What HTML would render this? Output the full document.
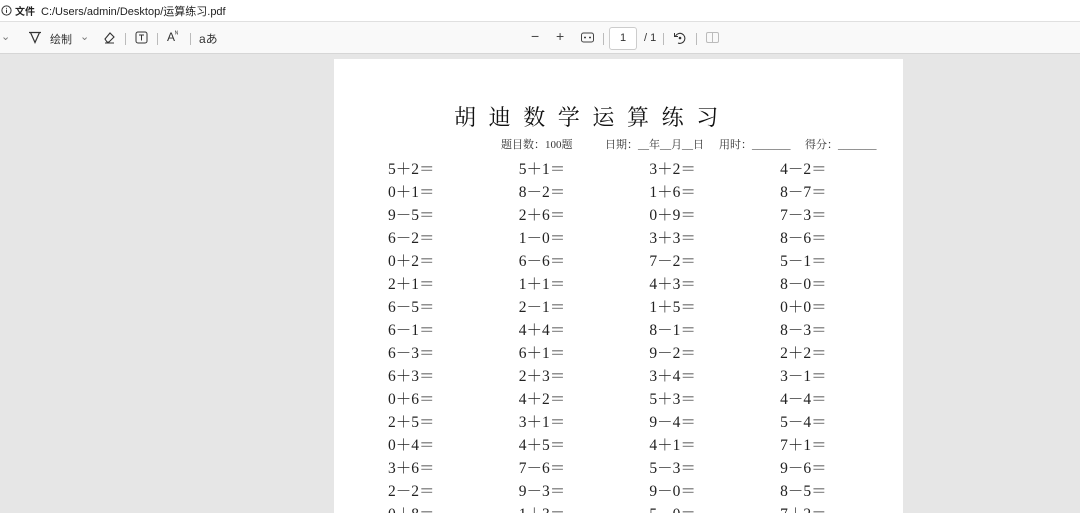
<!DOCTYPE html>
<html><head><meta charset="utf-8"><style>
*{margin:0;padding:0;box-sizing:border-box}
html,body{width:1080px;height:513px;overflow:hidden}
body{background:#e6e6e6;font-family:"Liberation Sans","Noto Sans CJK SC",sans-serif;position:relative}
#addr{position:absolute;left:0;top:0;width:1080px;height:22px;background:#fff;font-size:11px;color:#222;border-bottom:1px solid #e0e0e0}
#tb{position:absolute;left:0;top:22px;width:1080px;height:32px;background:#f9f9f9;border-bottom:1px solid #d6d6d6;font-size:11px;color:#333}
.a{position:absolute;white-space:nowrap}
.sep{position:absolute;top:11px;width:1px;height:12px;background:#bbb}
#page{position:absolute;left:334px;top:59px;width:569px;height:454px;background:#fff;overflow:hidden}
.title{position:absolute;left:120px;top:42px;font-family:"Liberation Serif","Noto Serif CJK SC",serif;font-size:22px;letter-spacing:12.6px;color:#111}
.info{position:absolute;top:77px;font-family:"Liberation Serif","Noto Serif CJK SC",serif;font-size:11px;color:#333;white-space:nowrap}
.row{position:absolute;left:54px;height:20px;font-family:"Liberation Serif","Noto Serif CJK SC",serif;font-size:15.5px;color:#222;white-space:nowrap}
.row span{display:inline-block;width:130.7px}
</style></head><body>
<div id="addr">
<svg class="a" style="left:1px;top:5px" width="11" height="11" viewBox="0 0 11 11"><circle cx="5.5" cy="5.5" r="4.6" fill="none" stroke="#333" stroke-width="1"/><path d="M5.5 4.6v3.3M5.5 2.9v.8" stroke="#333" stroke-width="1"/></svg>
<span class="a" style="left:15px;top:3px;font-weight:bold;font-size:10px">文件</span>
<span class="a" style="left:41px;top:3px">C:/Users/admin/Desktop/运算练习.pdf</span>
</div>
<div id="tb">
<span class="a" style="left:1px;top:8px;color:#777">⌄</span>
<svg class="a" style="left:28px;top:9px" width="14" height="13" viewBox="0 0 14 13"><path d="M1 1.5h12M2.5 1.5l4.5 10 4.5-10" fill="none" stroke="#333" stroke-width="1.2"/></svg>
<span class="a" style="left:50px;top:9px">绘制</span>
<span class="a" style="left:80px;top:8px;color:#777">⌄</span>
<svg class="a" style="left:103px;top:9px" width="13" height="13" viewBox="0 0 13 13"><path d="M2 8l5-6 4 4-5 5H4z M2 12h9" fill="none" stroke="#333" stroke-width="1.1"/></svg>
<div class="sep" style="left:125px"></div>
<svg class="a" style="left:135px;top:9px" width="13" height="13" viewBox="0 0 13 13"><rect x="1" y="1" width="11" height="11" rx="2" fill="none" stroke="#333"/><path d="M4 4h5M6.5 4v5.5" stroke="#333"/></svg>
<div class="sep" style="left:157px"></div>
<span class="a" style="left:167px;top:8px;font-size:12px">A<sup style="font-size:7px">ᴺ</sup></span>
<div class="sep" style="left:190px"></div>
<span class="a" style="left:199px;top:8px;font-size:12px">aあ</span>
<span class="a" style="left:531px;top:6px;font-size:14px;color:#444">−</span>
<span class="a" style="left:556px;top:6px;font-size:14px;color:#444">+</span>
<svg class="a" style="left:581px;top:10px" width="13" height="11" viewBox="0 0 13 11"><rect x=".5" y="1" width="12" height="9" rx="2" fill="none" stroke="#444"/><path d="M3 5.5h2M8 5.5h2" stroke="#444" stroke-width="1.5"/></svg>
<div class="sep" style="left:603px"></div>
<div class="a" style="left:609px;top:5px;width:28px;height:23px;border:1px solid #ccc;border-radius:3px;background:#fff;text-align:center;line-height:21px">1</div>
<span class="a" style="left:644px;top:10px">/ 1</span>
<div class="sep" style="left:663px"></div>
<svg class="a" style="left:673px;top:9px" width="14" height="14" viewBox="0 0 14 14"><path d="M2.5 5A5 5 0 1 1 5 12" fill="none" stroke="#333" stroke-width="1.1"/><path d="M1.5 2v3.5H5" fill="none" stroke="#333"/><circle cx="7" cy="7" r="1.3" fill="#333"/></svg>
<div class="sep" style="left:696px"></div>
<svg class="a" style="left:706px;top:10px" width="13" height="11" viewBox="0 0 13 11"><rect x=".5" y=".5" width="12" height="10" rx="1.5" fill="none" stroke="#bbb"/><path d="M6.5 .5v10" stroke="#bbb"/></svg>
</div>
<div id="page">
<div class="title">胡迪数学运算练习</div>
<div class="info" style="left:167px">题目数：100题</div>
<div class="info" style="left:271px">日期：__年__月__日</div>
<div class="info" style="left:385px">用时：_______</div>
<div class="info" style="left:471px">得分：_______</div>
<div class="row" style="top:98px"><span>5＋2＝</span><span>5＋1＝</span><span>3＋2＝</span><span>4－2＝</span></div>
<div class="row" style="top:121px"><span>0＋1＝</span><span>8－2＝</span><span>1＋6＝</span><span>8－7＝</span></div>
<div class="row" style="top:144px"><span>9－5＝</span><span>2＋6＝</span><span>0＋9＝</span><span>7－3＝</span></div>
<div class="row" style="top:167px"><span>6－2＝</span><span>1－0＝</span><span>3＋3＝</span><span>8－6＝</span></div>
<div class="row" style="top:190px"><span>0＋2＝</span><span>6－6＝</span><span>7－2＝</span><span>5－1＝</span></div>
<div class="row" style="top:213px"><span>2＋1＝</span><span>1＋1＝</span><span>4＋3＝</span><span>8－0＝</span></div>
<div class="row" style="top:236px"><span>6－5＝</span><span>2－1＝</span><span>1＋5＝</span><span>0＋0＝</span></div>
<div class="row" style="top:259px"><span>6－1＝</span><span>4＋4＝</span><span>8－1＝</span><span>8－3＝</span></div>
<div class="row" style="top:282px"><span>6－3＝</span><span>6＋1＝</span><span>9－2＝</span><span>2＋2＝</span></div>
<div class="row" style="top:305px"><span>6＋3＝</span><span>2＋3＝</span><span>3＋4＝</span><span>3－1＝</span></div>
<div class="row" style="top:328px"><span>0＋6＝</span><span>4＋2＝</span><span>5＋3＝</span><span>4－4＝</span></div>
<div class="row" style="top:351px"><span>2＋5＝</span><span>3＋1＝</span><span>9－4＝</span><span>5－4＝</span></div>
<div class="row" style="top:374px"><span>0＋4＝</span><span>4＋5＝</span><span>4＋1＝</span><span>7＋1＝</span></div>
<div class="row" style="top:397px"><span>3＋6＝</span><span>7－6＝</span><span>5－3＝</span><span>9－6＝</span></div>
<div class="row" style="top:420px"><span>2－2＝</span><span>9－3＝</span><span>9－0＝</span><span>8－5＝</span></div>
<div class="row" style="top:443px"><span>0＋8＝</span><span>1＋3＝</span><span>5－0＝</span><span>7＋2＝</span></div>
</div>
</body></html>
